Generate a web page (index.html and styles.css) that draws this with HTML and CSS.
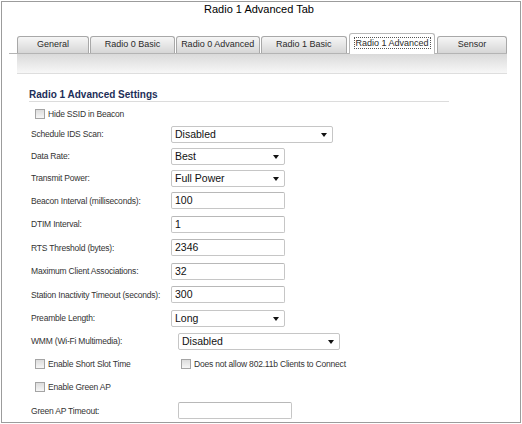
FILE: index.html
```html
<!DOCTYPE html>
<html lang="en">
<head>
    <meta charset="UTF-8">
    <title>Radio 1 Advanced Tab</title>
    <link rel="stylesheet" href="styles.css">
</head>
<body>
    <div class="frame">
        <div class="title">Radio 1 Advanced Tab</div>

        <!-- Tabs -->
        <div class="tabbar">
            <div class="tab tab-general">General</div>
            <div class="tab tab-r0b">Radio 0 Basic</div>
            <div class="tab tab-r0a">Radio 0 Advanced</div>
            <div class="tab tab-r1b">Radio 1 Basic</div>
            <div class="tab tab-r1a active"><span class="focus">Radio 1 Advanced</span></div>
            <div class="tab tab-sensor">Sensor</div>
        </div>
        <div class="band"></div>

        <!-- Settings -->
        <div class="settings">
            <h2>Radio 1 Advanced Settings</h2>

            <div class="check-row first">
                <span class="cb"></span>Hide SSID in Beacon
            </div>

            <div class="row sel">
                <div class="label">Schedule IDS Scan:</div>
                <div class="select wide">Disabled<span class="arrow"></span></div>
            </div>
            <div class="row sel">
                <div class="label">Data Rate:</div>
                <div class="select">Best<span class="arrow"></span></div>
            </div>
            <div class="row sel">
                <div class="label">Transmit Power:</div>
                <div class="select">Full Power<span class="arrow"></span></div>
            </div>
            <div class="row">
                <div class="label">Beacon Interval (milliseconds):</div>
                <div class="input">100</div>
            </div>
            <div class="row">
                <div class="label">DTIM Interval:</div>
                <div class="input">1</div>
            </div>
            <div class="row">
                <div class="label">RTS Threshold (bytes):</div>
                <div class="input">2346</div>
            </div>
            <div class="row">
                <div class="label">Maximum Client Associations:</div>
                <div class="input">32</div>
            </div>
            <div class="row">
                <div class="label">Station Inactivity Timeout (seconds):</div>
                <div class="input">300</div>
            </div>
            <div class="row">
                <div class="label">Preamble Length:</div>
                <div class="select">Long<span class="arrow"></span></div>
            </div>

            <div class="row sel lower">
                <div class="label">WMM (Wi-Fi Multimedia):</div>
                <div class="select wide">Disabled<span class="arrow"></span></div>
            </div>
            <div class="row lower">
                <div class="label check"><span class="cb"></span>Enable Short Slot Time</div>
                <div class="check-inline"><span class="cb"></span>Does not allow 802.11b Clients to Connect</div>
            </div>
            <div class="row lower">
                <div class="label check"><span class="cb"></span>Enable Green AP</div>
            </div>
            <div class="row lower">
                <div class="label">Green AP Timeout:</div>
                <div class="input"></div>
            </div>
        </div>
    </div>
</body>
</html>
```

FILE: styles.css
```css
body {
    margin: 0;
    padding: 0;
    background-color: #ffffff;
    font-family: "Liberation Sans", Arial, sans-serif;
}

.frame {
    box-sizing: border-box;
    width: 520px;
    height: 422px;
    margin: 1px 0 0 1px;
    border: 1px solid #9c9c9c;
    overflow: hidden;
}

.title {
    text-align: center;
    font-size: 11px;
    line-height: 15px;
    color: #000000;
    padding-right: 4px;
}

/* Tabs */

.tabbar {
    display: flex;
    align-items: flex-end;
    gap: 1px;
    height: 20px;
    margin: 16px 0 0 7px;
    padding-left: 8px;
    width: 490px;
    border-bottom: 1px solid #b4b4b4;
}

.tab {
    box-sizing: border-box;
    height: 17px;
    border: 1px solid #a8a8a8;
    border-bottom: none;
    border-radius: 3px 3px 0 0;
    background: linear-gradient(#f6f6f6, #d6d6d6);
    font-size: 9px;
    line-height: 15px;
    text-align: center;
    white-space: nowrap;
    color: #2a2a2a;
}

.tab-general { width: 74px; }
.tab-r0b { width: 87px; }
.tab-r0a { width: 86px; }
.tab-r1b { width: 89px; margin-right: 1px; }
.tab-r1a { width: 88px; margin-right: 1px; }
.tab-sensor { width: 72px; }

.tab.active {
    height: 21px;
    margin-bottom: -1px;
    background: #ffffff;
    border-color: #b8b8b8;
    line-height: 18px;
}

.focus {
    outline: 1px dotted #555555;
    padding: 0 1px;
}

.band {
    width: 490px;
    height: 19px;
    margin-left: 15px;
    background: linear-gradient(#dadada, #f7f7f7);
    border-bottom: 1px solid #dedede;
}

/* Settings */

.settings {
    padding-left: 27px;
    font-family: "Liberation Sans", Arial, sans-serif;
    font-size: 8.5px;
    letter-spacing: -0.2px;
    color: #333333;
}

.settings h2 {
    width: 420px;
    margin: 15px 0 0 0;
    height: 12px;
    font-size: 10px;
    letter-spacing: 0;
    line-height: 12px;
    color: #1d2e58;
    border-bottom: 1px solid #dcdcdc;
}

.check-row {
    display: flex;
    align-items: center;
    height: 18px;
    margin-top: 3px;
    padding-left: 6px;
}

.cb {
    box-sizing: border-box;
    width: 10px;
    height: 10px;
    margin-right: 3px;
    border: 1px solid #a4a4a4;
    background: linear-gradient(#dcdcdc, #f6f6f6);
    flex-shrink: 0;
}

.row {
    display: flex;
    align-items: center;
    height: 23.5px;
}

.row.sel {
    height: 22px;
}

.label {
    width: 140px;
    padding-left: 2px;
    white-space: nowrap;
}

.row.lower .label {
    width: 147px;
}

.label.check {
    display: flex;
    align-items: center;
    padding-left: 6px;
    width: 143px;
}

.row.lower .label.check {
    width: 143px;
}

.check-inline {
    display: flex;
    align-items: center;
    margin-left: 3px;
    white-space: nowrap;
}

.select,
.input {
    box-sizing: border-box;
    position: relative;
    width: 114px;
    height: 17px;
    padding-left: 3px;
    border: 1px solid #c6c6c6;
    border-radius: 2px;
    background: #ffffff;
    font-size: 10.5px;
    letter-spacing: 0;
    line-height: 15px;
    color: #111111;
}

.select.wide {
    width: 162px;
}

.input {
    border-top-color: #b8b8b8;
}

.arrow {
    position: absolute;
    right: 5px;
    top: 6px;
    width: 0;
    height: 0;
    border-left: 3px solid transparent;
    border-right: 3px solid transparent;
    border-top: 4px solid #111111;
}
```
